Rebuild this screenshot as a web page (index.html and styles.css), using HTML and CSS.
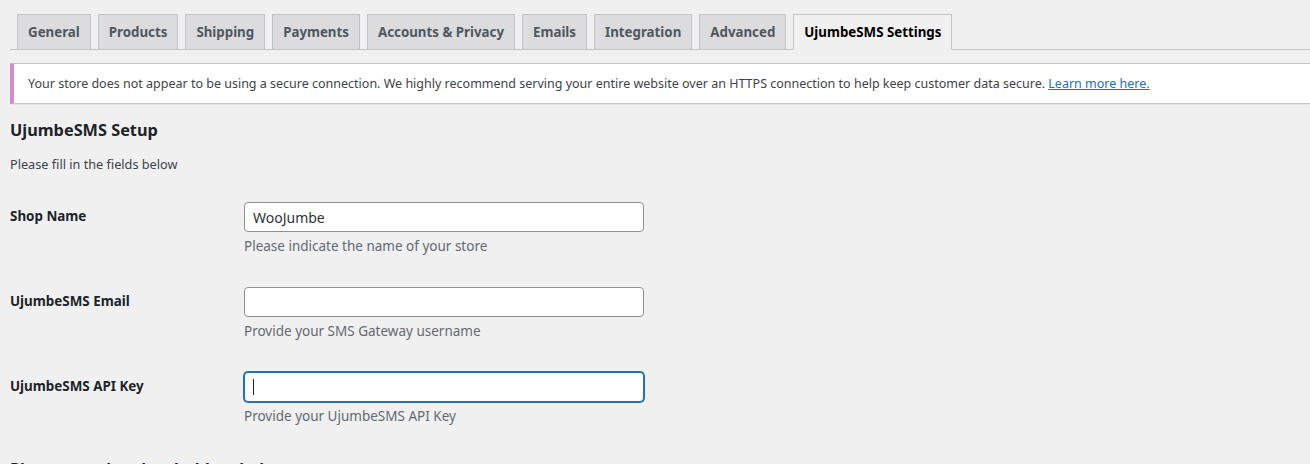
FILE: index.html
```html
<!DOCTYPE html>
<html lang="en">
<head>
<meta charset="utf-8">
<title>WooCommerce Settings – UjumbeSMS</title>
<link rel="stylesheet" href="styles.css">
</head>
<body>
<div class="wrap">
  <nav class="tabs">
    <a class="tab" href="#">General</a>
    <a class="tab" href="#">Products</a>
    <a class="tab" href="#">Shipping</a>
    <a class="tab" href="#">Payments</a>
    <a class="tab" href="#">Accounts &amp; Privacy</a>
    <a class="tab" href="#">Emails</a>
    <a class="tab" href="#">Integration</a>
    <a class="tab" href="#">Advanced</a>
    <a class="tab tab-active" href="#">UjumbeSMS Settings</a>
  </nav>

  <div class="notice">
    <p>Your store does not appear to be using a secure connection. We highly recommend serving your entire website over an HTTPS connection to help keep customer data secure. <a href="#">Learn more here.</a></p>
  </div>

  <h2 class="section-title">UjumbeSMS Setup</h2>
  <p class="intro">Please fill in the fields below</p>

  <table class="form-table">
    <tr>
      <th><label for="shop">Shop Name</label></th>
      <td>
        <input id="shop" class="field" type="text" value="WooJumbe">
        <p class="description">Please indicate the name of your store</p>
      </td>
    </tr>
    <tr>
      <th><label for="email">UjumbeSMS Email</label></th>
      <td>
        <input id="email" class="field" type="text" value="">
        <p class="description">Provide your SMS Gateway username</p>
      </td>
    </tr>
    <tr>
      <th><label for="key">UjumbeSMS API Key</label></th>
      <td>
        <div class="field-wrap">
          <input id="key" class="field field-focus" type="text" value="">
          <span class="caret"></span>
        </div>
        <p class="description">Provide your UjumbeSMS API Key</p>
      </td>
    </tr>
  </table>

  <h2 class="section-title section-next">Please use the placeholders below</h2>
</div>
</body>
</html>
```

FILE: styles.css
```css
html, body {
  margin: 0;
  padding: 0;
  background: #f0f0f1;
}
body {
  font-family: "Noto Sans", Lato, sans-serif;
  font-size: 13px;
  line-height: 1.4em;
  color: #3c434a;
  overflow: hidden;
}
.wrap {
  margin-left: 10px;
  width: 1320px;
}
.tabs {
  display: flex;
  padding-top: 14px;
  border-bottom: 1px solid #c3c4c7;
}
.tab {
  margin-left: 7px;
  margin-bottom: -1px;
  padding: 5px 10px;
  font-size: 13.3px;
  line-height: 24px;
  font-weight: 700;
  color: #50575e;
  background: #dcdcde;
  border: 1px solid #c3c4c7;
  text-decoration: none;
  white-space: nowrap;
}
.tab-active {
  background: #f0f0f1;
  color: #000;
  border-bottom-color: #f0f0f1;
}
.notice {
  margin-top: 13px;
  background: #fff;
  border: 1px solid #c3c4c7;
  border-left: 4px solid #d48bc8;
  box-shadow: 0 1px 1px rgba(0,0,0,0.04);
  padding: 1px 12px;
}
.notice p {
  margin: 6.5px 0;
  padding: 2px;
  font-size: 12.5px;
  line-height: 19.5px;
  color: #3c434a;
}
.notice a {
  color: #2271b1;
  text-decoration: underline;
}
.section-title {
  margin: 15px 0 0;
  font-size: 16.3px;
  line-height: 22px;
  font-weight: 700;
  color: #1d2327;
}
.intro {
  margin: 14px 0 0;
  font-size: 12.7px;
  line-height: 19.5px;
}
.form-table {
  margin-top: 12px;
  border-collapse: collapse;
}
.form-table th {
  width: 224px;
  padding: 21px 0;
  text-align: left;
  vertical-align: top;
  font-size: 13.4px;
  line-height: 18px;
  font-weight: 700;
  color: #1d2327;
}
.form-table td {
  padding: 16px 0 14px 10px;
  vertical-align: top;
  font-size: 14px;
  line-height: 1.3;
}
.field {
  box-sizing: border-box;
  display: block;
  width: 400px;
  height: 30px;
  margin: 0;
  padding: 0 8px;
  font-family: inherit;
  font-size: 14px;
  color: #2c3338;
  background: #fff;
  border: 1px solid #8c8f94;
  border-radius: 4px;
  outline: none;
}
.field-focus {
  border-color: #2271b1;
  box-shadow: 0 0 0 1px #2271b1;
}
.field-wrap {
  position: relative;
  width: 400px;
}
.caret {
  position: absolute;
  left: 9px;
  top: 7px;
  width: 1px;
  height: 16px;
  background: #1d2327;
}
.description {
  margin: 4px 0 0;
  font-size: 13.5px;
  line-height: 21px;
  color: #646970;
}
.section-next {
  margin-top: 17px;
}
```
